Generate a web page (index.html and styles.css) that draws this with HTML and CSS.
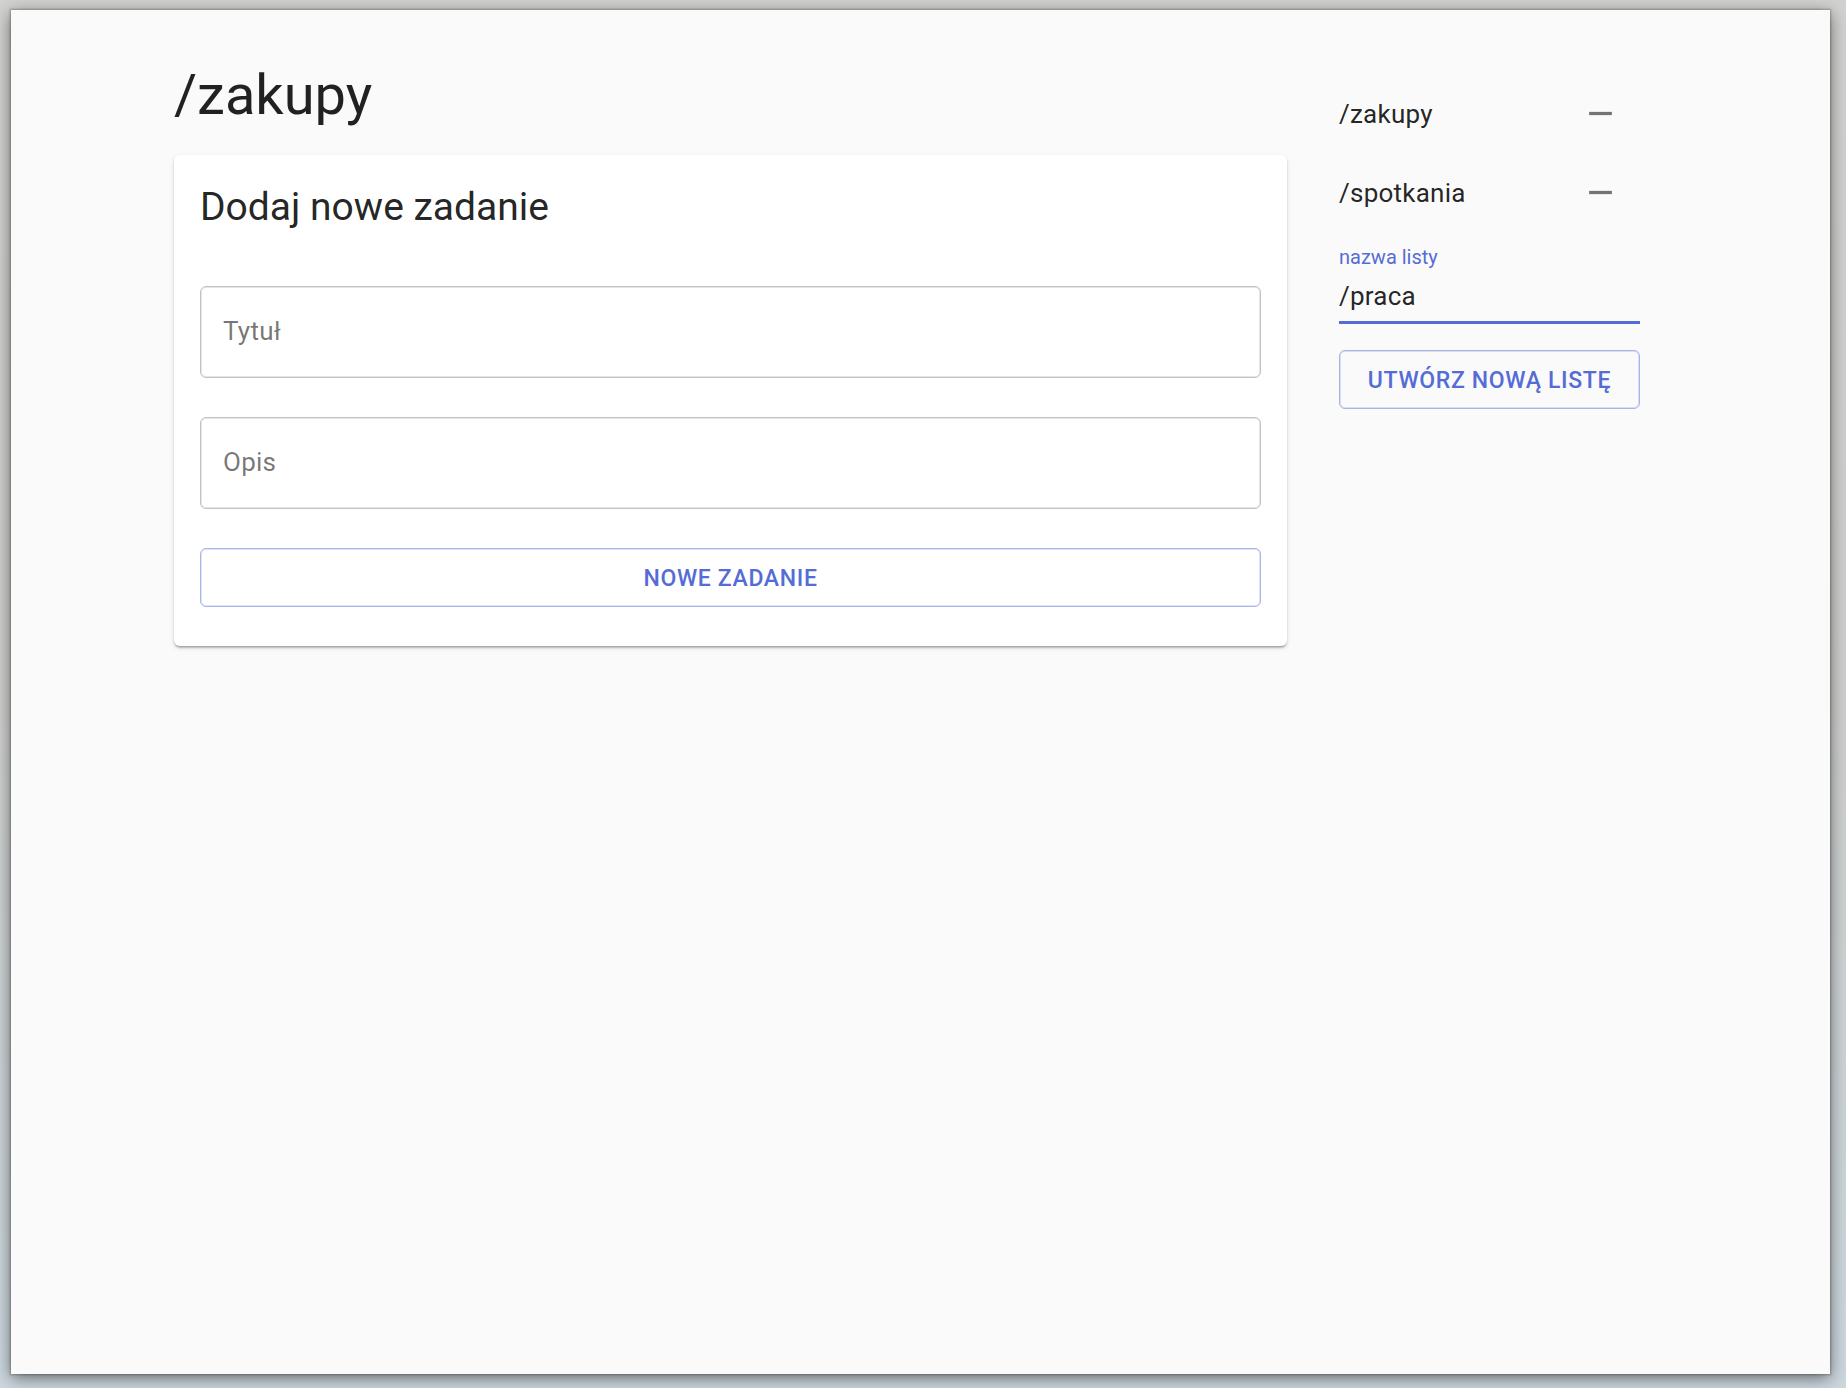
FILE: index.html
```html
<!DOCTYPE html>
<html lang="pl">
<head>
<meta charset="utf-8">
<meta name="viewport" content="width=device-width, initial-scale=1">
<title>/zakupy</title>
<link rel="stylesheet" href="styles.css">
</head>
<body>
<div class="window">
  <div class="container">
    <main class="main">
      <h1 class="page-title">/zakupy</h1>
      <form class="card">
        <h2 class="card-title">Dodaj nowe zadanie</h2>
        <input class="field" type="text" placeholder="Tytuł" aria-label="Tytuł">
        <input class="field" type="text" placeholder="Opis" aria-label="Opis">
        <button class="button" type="button">Nowe zadanie</button>
      </form>
    </main>
    <aside class="sidebar">
      <ul class="lists">
        <li class="list-row">
          <a class="list-link" href="#zakupy">/zakupy</a>
          <button class="icon-button" type="button" aria-label="Usuń /zakupy">
            <svg class="icon" viewBox="0 0 24 24" aria-hidden="true"><path d="M19 13H5v-2h14v2z"/></svg>
          </button>
        </li>
        <li class="list-row">
          <a class="list-link" href="#spotkania">/spotkania</a>
          <button class="icon-button" type="button" aria-label="Usuń /spotkania">
            <svg class="icon" viewBox="0 0 24 24" aria-hidden="true"><path d="M19 13H5v-2h14v2z"/></svg>
          </button>
        </li>
      </ul>
      <form class="new-list">
        <label class="list-label" for="list-name">nazwa listy</label>
        <input class="list-input" id="list-name" type="text" value="/praca">
        <button class="button" type="button">Utwórz nową listę</button>
      </form>
    </aside>
  </div>
</div>
</body>
</html>
```
FILE: styles.css
```css
:root {
  --primary: #556cd6;
  --primary-border: rgba(85, 108, 214, 0.5);
  --text: rgba(0, 0, 0, 0.87);
  --muted: rgba(0, 0, 0, 0.54);
}

* {
  box-sizing: border-box;
}

body {
  margin: 0;
  min-height: 100vh;
  display: flex;
  padding: 10px 16px 14px 11px;
  background: linear-gradient(#d2d2d0, #cfd0ce 50%, #ccd7de);
  font-family: Roboto, "Liberation Sans", sans-serif;
  font-size: 26px;
  letter-spacing: 0.00938em;
  color: var(--text);
}

.window {
  flex: 1;
  min-width: 0;
  padding: 50px 26px;
  background: #fafafa;
  box-shadow: 0 0 2px 1px rgba(0, 0, 0, 0.25), 0 4px 16px rgba(0, 0, 0, 0.5);
}

.container {
  display: grid;
  grid-template-columns: minmax(0, 1fr) 301px;
  gap: 52px;
  max-width: 1493px;
  margin: 0 auto;
  padding-right: 27px;
}

.page-title,
.card-title {
  margin: 0;
  font-weight: 400;
  letter-spacing: 0;
}

.page-title {
  margin-bottom: 24px;
  font-size: 56px;
  line-height: 71px;
}

.card {
  display: flex;
  flex-direction: column;
  gap: 39px;
  padding: 26px 26px 39px;
  border-radius: 6px;
  background: #fff;
  box-shadow: 0 3px 2px -2px rgba(0, 0, 0, 0.2), 0 2px 2px rgba(0, 0, 0, 0.14), 0 2px 5px rgba(0, 0, 0, 0.12);
}

.card-title {
  padding-bottom: 13px;
  font-size: 39px;
  line-height: 53px;
}

.field {
  width: 100%;
  height: 92px;
  padding: 0 22px 2px;
  border: 1px solid rgba(0, 0, 0, 0.23);
  border-radius: 6px;
  outline: 0;
  background: transparent;
  box-shadow: inset 0 0 0 1px rgba(0, 0, 0, 0.1);
  font: inherit;
  letter-spacing: inherit;
  color: inherit;
}

.field::placeholder {
  color: var(--muted);
  opacity: 1;
}

.button {
  width: 100%;
  height: 59px;
  padding: 2px 22px 0;
  border: 1px solid var(--primary-border);
  border-radius: 6px;
  background: transparent;
  box-shadow: inset 0 0 0 1px rgba(85, 108, 214, 0.2);
  font: 500 23px/40px Roboto, "Liberation Sans", sans-serif;
  letter-spacing: 0.02857em;
  text-transform: uppercase;
  white-space: nowrap;
  color: var(--primary);
  cursor: pointer;
}

.sidebar {
  padding-top: 14px;
}

.lists {
  margin: 0;
  padding: 0;
  list-style: none;
}

.list-row {
  display: flex;
  align-items: center;
  justify-content: space-between;
}

.list-link {
  color: inherit;
  text-decoration: none;
}

.icon-button {
  display: flex;
  padding: 20px;
  border: 0;
  border-radius: 50%;
  background: transparent;
  color: var(--muted);
  cursor: pointer;
}

.icon {
  width: 39px;
  height: 39px;
  fill: currentColor;
}

.new-list {
  display: flex;
  flex-direction: column;
  padding-top: 12px;
}

.list-label {
  font-size: 20px;
  line-height: 26px;
  letter-spacing: 0;
  color: var(--primary);
}

.list-input {
  width: 100%;
  height: 54px;
  margin-bottom: 26px;
  padding: 1px 0 0;
  border: 0;
  border-bottom: 3px solid var(--primary);
  border-radius: 0;
  outline: 0;
  background: transparent;
  font: inherit;
  letter-spacing: inherit;
  color: inherit;
}
```
